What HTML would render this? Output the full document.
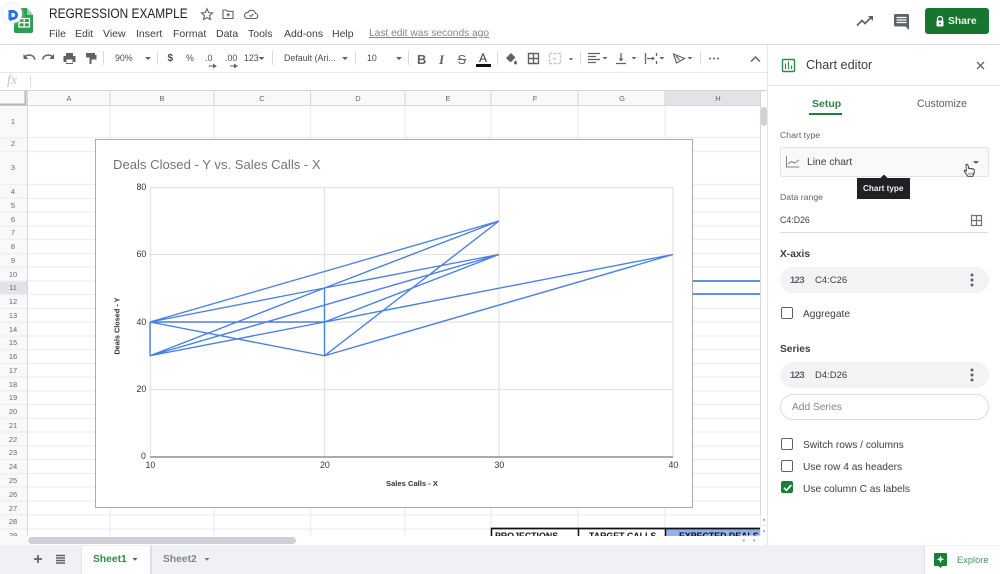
<!DOCTYPE html>
<html><head><meta charset="utf-8"><title>REGRESSION EXAMPLE</title>
<style>
html,body{margin:0;padding:0;width:1000px;height:574px;overflow:hidden;background:#fff}
body{position:relative;font-family:"Liberation Sans",sans-serif;color:#3c4043;filter:blur(.3px)}
.t{position:absolute;white-space:nowrap;line-height:1}
.b{position:absolute}
svg{position:absolute;overflow:visible}
.m{font-size:10.5px;top:28.500px;color:#3c4043}
.tb{font-size:8.8px;top:54px;color:#4a4d50}
.h{font-size:7.5px;color:#666;top:95px;width:30px;text-align:center}
.r{font-size:7.5px;color:#666;left:0;width:26px;text-align:center}
.l{font-size:8.7px;color:#5f6368;left:780px}
.p{font-size:10.2px;color:#3c4043}
.c{font-size:9.5px;color:#3c4043}
.ax{font-size:8.8px;color:#333}
.cb{position:absolute;left:781px;width:10px;height:10px;border:1.6px solid #5f6368;border-radius:2px}
</style></head><body>

<!-- header -->
<svg style="left:0;top:0" width="60" height="44" viewBox="0 0 60 44">
<path d="M14 10q0-2 2-2h11l6 7v16q0 2-2 2H16q-2 0-2-2z" fill="#2a9d4f"/>
<path d="M27 8l6 7h-6z" fill="#8ed1b1"/>
<path d="M19 18.500h10.500v8.500H19zM24.200 18.500v8.500M19 22.700h10.500" fill="none" stroke="#fff" stroke-width="1.300"/>
<circle cx="12.500" cy="13.500" r="9.500" fill="#fff" style="filter:drop-shadow(0 0 2px #ddd)"/>
<path d="M8.500 10h4.500a5 5 0 0 1 0 10h-1.500v-3H13a2 2 0 0 0 0-4h-1.500v8.500l-3-2z" fill="#2b6fe0"/>
</svg>
<div class="t" style="left:49px;top:6.500px;font-size:13.500px;color:#202124;transform:scaleX(.88);transform-origin:0 0">REGRESSION EXAMPLE</div>
<svg style="left:200px;top:7px" width="60" height="14" viewBox="0 0 60 14" fill="none" stroke="#5f6368" stroke-width="1.100">
<path d="M7 1.800l1.600 3.700 4 .4-3 2.700.9 3.900L7 10.500l-3.500 2 .9-3.900-3-2.700 4-.4z"/>
<path d="M23 3h3.500l1 1.300H33v7.200H23zM28.200 6v3.600M26.400 7.800H30"/>
<path d="M47 11.500h8a2.500 2.500 0 0 0 .5-5 4 4 0 0 0-7.500-1 3 3 0 0 0-1 6zM49.500 8.200l1.400 1.300 2.300-2.500"/>
</svg>
<span class="t m" style="left:49px">File</span><span class="t m" style="left:75px">Edit</span><span class="t m" style="left:103px">View</span><span class="t m" style="left:136px">Insert</span><span class="t m" style="left:173px">Format</span><span class="t m" style="left:216px">Data</span><span class="t m" style="left:248px">Tools</span><span class="t m" style="left:284px">Add-ons</span><span class="t m" style="left:332px">Help</span>
<span class="t m" style="left:369px;color:#80868b;text-decoration:underline;font-size:10.200px">Last edit was seconds ago</span>

<svg style="left:855px;top:13px" width="60" height="18" viewBox="0 0 60 18">
<path d="M2 12.500l5-5 3 3 6.500-6.500" fill="none" stroke="#5f6368" stroke-width="1.700"/><path d="M13 3h5v5z" fill="#5f6368"/>
<path d="M40.500 1h12q1.500 0 1.500 1.500V17l-3.500-3.500h-10q-1.500 0-1.500-1.500V2.500Q39 1 40.500 1z" fill="#5f6368"/>
<path d="M41.500 4.500h10M41.500 7h10M41.500 9.500h10" stroke="#fff" stroke-width="1.200"/>
</svg>
<div class="b" style="left:925px;top:8px;width:64px;height:26px;background:#18752f;border-radius:3px"></div>
<svg style="left:935px;top:16px" width="10" height="11" viewBox="0 0 10 11"><path d="M2.500 4.500V3a2.500 2.500 0 0 1 5 0v1.500" fill="none" stroke="#fff" stroke-width="1.200"/><rect x="1.500" y="4.500" width="7" height="6" rx="1" fill="#fff"/><circle cx="5" cy="7.500" r="1" fill="#18752f"/></svg>
<span class="t" style="left:948px;top:17px;font-size:10.300px;font-weight:bold;color:#e8f3ea">Share</span>

<div class="b" style="left:0;top:44px;width:1000px;height:1px;background:#dadce0"></div>

<!-- toolbar -->
<svg style="left:0;top:45px" width="768" height="27" viewBox="0 45 768 27">
<g fill="none" stroke="#5f6368" stroke-width="1.400">
<path d="M25 56.500q4-3 8.500 0l1.500 3M52.500 56.500q-4-3-8.500 0l-1.500 3"/>
</g>
<path d="M23.500 54v5h4.800zM54 54v5h-4.800z" fill="#5f6368"/>
<path d="M66 53h7v3h2.500v6H73v2h-7v-2h-2.500v-6H66z" fill="#5f6368"/><rect x="66.500" y="59.500" width="6" height="3.500" fill="#fff"/>
<path d="M86 53h9v4.500h-9zM95 55h1.500v4.500h-5V64h-2v-6.500h5V55z" fill="#5f6368"/>
<g fill="#5f6368">
<path d="M145 57h6l-3 3zM258.500 57h6l-3 3zM342 57h6l-3 3zM396 57h6l-3 3zM569 58h4l-2 2.500z"/>
<path d="M602.500 57h5l-2.500 2.500zM631.500 57h5l-2.500 2.500zM659.500 57h5l-2.500 2.500zM687.500 57h5l-2.500 2.500z"/>
<circle cx="710" cy="58.500" r="1"/><circle cx="714" cy="58.500" r="1"/><circle cx="718" cy="58.500" r="1"/>
</g>
<path d="M213.500 66h-5M216 66l-2.500-1.500v3zM230 66h5M237 66l-2.500-1.500v3z" stroke="#5f6368" stroke-width="1" fill="#5f6368"/>
<g stroke="#dadce0" stroke-width="1"><path d="M103.500 51v14M157.500 51v14M272.500 51v14M355.500 51v14M408.500 51v14M497.500 51v14M580.500 51v14M700.500 51v14"/></g>
<rect x="476" y="64" width="15" height="3" fill="#111"/>
<!-- fill -->
<path d="M506 58l5-5 4.500 4.500-4 4q-1 1-2 0zM515.500 60q1.500 2 1.500 3a1.200 1.200 0 0 1-3 0q0-1 1.500-3z" fill="#5f6368"/>
<!-- borders -->
<path d="M528.500 53.500h10v10h-10zM533.500 53.500v10M528.500 58.500h10" fill="none" stroke="#5f6368" stroke-width="1.400"/>
<path d="M549.500 53.500h11v10h-11zM553 58.500h4" fill="none" stroke="#c4c7c9" stroke-width="1.400" stroke-dasharray="3 1.200"/>
<!-- aligns -->
<path d="M588 53.500h12M588 56.500h8M588 59.500h12M588 62.500h8" stroke="#5f6368" stroke-width="1.200"/>
<path d="M616 63.500h10M621 53v7" stroke="#5f6368" stroke-width="1.300"/><path d="M618.500 58.500h5l-2.500 3z" fill="#5f6368"/>
<path d="M645.500 53v11M656.500 53v3M656.500 61v3M647 58.500h7" stroke="#5f6368" stroke-width="1.300"/><path d="M652 56.500l3 2-3 2z" fill="#5f6368"/>
<path d="M673.500 54l11 4.500-8 4.500zM676 56l3.500 4" fill="none" stroke="#5f6368" stroke-width="1.200"/>
<path d="M751 61.500l4.500-4.500 4.500 4.500" fill="none" stroke="#5f6368" stroke-width="1.500"/>
</svg>
<span class="t tb" style="left:115px">90%</span>
<span class="t tb" style="left:167.500px;font-weight:bold;font-size:10px;top:54px">$</span>
<span class="t tb" style="left:186px">%</span>
<span class="t tb" style="left:205px">.0</span>
<span class="t tb" style="left:225px">.00</span>
<span class="t tb" style="left:244px">123</span>
<span class="t tb" style="left:284px;font-size:8.900px">Default (Ari...</span>
<span class="t tb" style="left:367px">10</span>
<span class="t" style="left:417px;top:52.500px;font-size:13px;font-weight:bold;color:#5f6368">B</span>
<span class="t" style="left:439px;top:52.500px;font-size:13px;font-style:italic;font-family:'Liberation Serif',serif;font-weight:bold;color:#5f6368">I</span>
<span class="t" style="left:457.500px;top:52.500px;font-size:13px;color:#5f6368;text-decoration:line-through">S</span>
<span class="t" style="left:479px;top:52px;font-size:12px;color:#333">A</span>

<div class="b" style="left:0;top:72px;width:768px;height:1px;background:#e6e7e9"></div>
<!-- fx bar -->
<span class="t" style="left:7px;top:73px;font:italic 14px 'Liberation Serif',serif;color:#c0c3c6">fx</span>
<div class="b" style="left:30px;top:75px;width:1px;height:12px;background:#dadce0"></div>
<div class="b" style="left:0;top:90px;width:768px;height:1px;background:#cfd1d4"></div>

<!-- grid -->
<svg style="left:0;top:0" width="1000" height="574" viewBox="0 0 1000 574">
<rect x="0" y="91" width="760" height="15" fill="#f8f9fa"/>
<rect x="665" y="91" width="95" height="15" fill="#e1e3e7"/>
<rect x="0" y="106" width="27" height="430" fill="#f8f9fa"/>
<rect x="0" y="281" width="27" height="14" fill="#e1e3e7"/>
<g stroke="#eeeef0" stroke-width="1.300">
<path d="M0 137.500H760M0 151.500H760M0 184.500H760M0 198.500H760M0 212H760M0 226H760M0 239.500H760M0 253.500H760M0 267H760M0 281H760M0 294.500H760M0 308.500H760M0 322H760M0 336H760M0 349.500H760M0 363.500H760M0 377H760M0 391H760M0 404.500H760M0 418.500H760M0 432H760M0 446H760M0 459.500H760M0 473.500H760M0 487H760M0 501H760M0 515H760M0 529H760"/>
<path d="M110 91V536M214 91V536M310.500 91V536M405 91V536M491 91V536M578 91V536M665 91V536"/>
</g>
<g stroke="#d6d8db" stroke-width="1"><path d="M0 105.500H760M27.500 91V536M110 91V106M214 91V106M310.500 91V106M405 91V106M491 91V106M578 91V106M665 91V106M760.500 91V536"/></g>
<path d="M0 104.500H25.500V91" fill="none" stroke="#b4b6b9" stroke-width="2"/>
<!-- Projections -->
<rect x="666" y="529" width="94" height="8" fill="#8fb1f0"/>
<path d="M491 528.500H760" stroke="#111" stroke-width="1.800"/>
<path d="M491.500 528V537M578.500 528V537M665.500 528V537" stroke="#111" stroke-width="1.500"/>
<path d="M692 281H760M692 294H760" stroke="#4a80e6" stroke-width="1.800"/>
</svg>
<div class="b" style="left:491px;top:530px;width:269px;height:6px;overflow:hidden">
<span class="t" style="left:4px;top:2px;font-size:8.800px;font-weight:bold;color:#111">PROJECTIONS</span>
<span class="t" style="left:98px;top:2px;font-size:8.800px;font-weight:bold;color:#111">TARGET CALLS</span>
<span class="t" style="left:188px;top:2px;font-size:8.800px;font-weight:bold;color:#111">EXPECTED DEALS</span>
</div>
<span class="t h" style="left:54px">A</span><span class="t h" style="left:147px">B</span><span class="t h" style="left:247px">C</span><span class="t h" style="left:343px">D</span><span class="t h" style="left:433px">E</span><span class="t h" style="left:520px">F</span><span class="t h" style="left:607px">G</span><span class="t h" style="left:703px">H</span>
<span class="t r" style="top:118px">1</span><span class="t r" style="top:140px">2</span><span class="t r" style="top:164px">3</span><span class="t r" style="top:188px">4</span><span class="t r" style="top:202px">5</span><span class="t r" style="top:216px">6</span><span class="t r" style="top:229px">7</span><span class="t r" style="top:243px">8</span><span class="t r" style="top:257px">9</span><span class="t r" style="top:271px">10</span><span class="t r" style="top:284px">11</span><span class="t r" style="top:298px">12</span><span class="t r" style="top:312px">13</span><span class="t r" style="top:326px">14</span><span class="t r" style="top:339px">15</span><span class="t r" style="top:353px">16</span><span class="t r" style="top:367px">17</span><span class="t r" style="top:381px">18</span><span class="t r" style="top:394px">19</span><span class="t r" style="top:408px">20</span><span class="t r" style="top:422px">21</span><span class="t r" style="top:436px">22</span><span class="t r" style="top:449px">23</span><span class="t r" style="top:463px">24</span><span class="t r" style="top:477px">25</span><span class="t r" style="top:491px">26</span><span class="t r" style="top:505px">27</span><span class="t r" style="top:518px">28</span><span class="t r" style="top:532px">29</span>

<!-- chart -->
<div class="b" style="left:95px;top:139px;width:596px;height:367px;background:#fff;border:1px solid #ababab"></div>
<span class="t" style="left:113px;top:157.500px;font-size:13.100px;color:#757575">Deals Closed - Y vs. Sales Calls - X</span>
<svg style="left:0;top:0" width="1000" height="574" viewBox="0 0 1000 574">
<g stroke="#e3e3e3" stroke-width="1.200" fill="none">
<path d="M150 187.500H673M150 254.500H673M150 322H673M150 389.500H673M150.500 187V457M324.500 187V457M499 187V457M673 187V457"/>
</g>
<path d="M150 457H673" stroke="#777" stroke-width="1.200"/>
<g fill="none" stroke="#4a80e6" stroke-width="1.400">
<path d="M150 322L499 221M150 322L324.500 288L499 254.500M150 355.750L324.500 288L499 221M150 355.750L499 254.500M150 355.750L324.500 322L499 254.500M150 322H324.500L673 254.500M150 322L324.500 355.750L499 221M324.500 355.750L673 254.500M150 322V355.750M324.500 288V355.750"/>
</g>
</svg>
<span class="t ax" style="left:136.500px;top:183px">80</span><span class="t ax" style="left:136.500px;top:250px">60</span><span class="t ax" style="left:136.500px;top:318px">40</span><span class="t ax" style="left:136.500px;top:385px">20</span><span class="t ax" style="left:141px;top:452px">0</span>
<span class="t ax" style="left:145.500px;top:461px">10</span><span class="t ax" style="left:320px;top:461px">20</span><span class="t ax" style="left:494.500px;top:461px">30</span><span class="t ax" style="left:668.500px;top:461px">40</span>
<span class="t" style="left:386px;top:480px;font-size:7.600px;font-weight:bold;color:#333">Sales Calls - X</span>
<span class="t" style="left:117px;top:326px;font-size:7.300px;font-weight:bold;color:#333;transform:translate(-50%,-50%) rotate(-90deg)">Deals Closed - Y</span>

<!-- scrollbars -->
<div class="b" style="left:761px;top:91px;width:7px;height:454px;background:#fff"></div>
<div class="b" style="left:761px;top:107px;width:6px;height:19px;border-radius:3px;background:#ced1d5"></div>
<div class="b" style="left:0;top:536px;width:768px;height:9px;background:#fff"></div>
<div class="b" style="left:0;top:536px;width:27px;height:9px;background:#f8f9fa"></div>
<div class="b" style="left:28px;top:537px;width:268px;height:7px;border-radius:4px;background:#ced1d5"></div>
<svg style="left:740px;top:514px" width="28" height="31" viewBox="0 0 28 31"><path d="M22.500 6.500h3l-1.500-2zM22.500 16.500h3l-1.500 2zM4.500 25l-2 1.500 2 1.500zM13.500 25l2 1.500-2 1.500z" fill="#8a8d90"/><path d="M20.500 0V22H0M20.500 11.500H28" stroke="#eceded" fill="none"/></svg>

<!-- bottom bar -->
<div class="b" style="left:0;top:545px;width:1000px;height:29px;background:#f0f1f4"></div>
<div class="b" style="left:82px;top:546px;width:68px;height:28px;background:#fff;box-shadow:1px 0 0 #dcdde0,-1px 0 0 #e4e5e8"></div>
<div class="b" style="left:151px;top:546px;width:1px;height:28px;background:#dcdde0"></div>
<div class="b" style="left:925px;top:546px;width:75px;height:28px;background:#fff;box-shadow:-1px 0 0 #dcdde0"></div>
<svg style="left:0;top:545px" width="1000" height="29" viewBox="0 545 1000 29">
<path d="M34 559h8M38 555v8" stroke="#5f6368" stroke-width="1.700"/>
<path d="M56 555.500h9M56 558h9M56 560.500h9M56 563h9" stroke="#5f6368" stroke-width="1.500"/>
<path d="M132.500 558h5l-2.500 2.700z" fill="#188038"/>
<path d="M204.500 558h5l-2.500 2.700z" fill="#777"/>
<path d="M935 553h11q1 0 1 1v11q0 1-1 1h-3.500l-2 2-2-2H935q-1 0-1-1v-11q0-1 1-1z" fill="#188038"/>
<path d="M940.500 555.500l1 2.800 2.800 1-2.800 1-1 2.800-1-2.800-2.800-1 2.800-1z" fill="#fff"/>
</svg>
<span class="t" style="left:93px;top:555px;font-size:10.300px;font-weight:bold;color:#2f8a4b">Sheet1</span>
<span class="t" style="left:163px;top:555px;font-size:10.300px;font-weight:bold;color:#80868b">Sheet2</span>
<span class="t" style="left:957px;top:555.500px;font-size:9.300px;color:#3f9a5e">Explore</span>

<!-- side panel -->
<div class="b" style="left:768px;top:45px;width:232px;height:500px;background:#fff"></div>
<div class="b" style="left:767px;top:45px;width:1px;height:500px;background:#e6e7e9"></div>
<div class="b" style="left:768px;top:85px;width:232px;height:1px;background:#e3e4e6"></div>
<svg style="left:0;top:0" width="1000" height="574" viewBox="0 0 1000 574">
<rect x="782.500" y="59.500" width="12" height="12" rx="1" fill="none" stroke="#2a8a4a" stroke-width="1.400"/>
<path d="M785.500 63.500v5.500M788.500 61.500v7.500M791.500 65.500v3.500" stroke="#2a8a4a" stroke-width="1.200"/>
<path d="M977 62l7 7M984 62l-7 7" stroke="#5f6368" stroke-width="1.300"/>
<rect x="809" y="113" width="33" height="2" fill="#188038"/>
<rect x="780.500" y="147.500" width="208" height="29" rx="2" fill="#f8f9fa" stroke="#e2e3e5"/>
<path d="M786.500 156v11h13" fill="none" stroke="#808387" stroke-width="1"/>
<path d="M788 164l3.500-2.500 3 1.500 4.500-3" fill="none" stroke="#808387" stroke-width="1"/>
<path d="M973 161h6l-3 3z" fill="#5f6368"/>
<rect x="857" y="178" width="53" height="21" fill="#202124"/><path d="M880 178.500l4-4 4 4z" fill="#202124"/>
<path d="M780 232.500H988" stroke="#dadce0"/>
<path d="M971.500 215.500h10v10h-10zM976.500 215.500v10M971.500 220.500h10" fill="none" stroke="#70757a" stroke-width="1.200"/>
<rect x="780" y="267" width="209" height="26" rx="13" fill="#f1f3f4"/>
<rect x="780" y="362" width="209" height="26" rx="13" fill="#f1f3f4"/>
<rect x="780.500" y="394.500" width="208" height="25" rx="12.500" fill="#fff" stroke="#dadce0"/>
<g fill="#5f6368"><circle cx="972" cy="275" r="1.500"/><circle cx="972" cy="280" r="1.500"/><circle cx="972" cy="285" r="1.500"/><circle cx="972" cy="370" r="1.500"/><circle cx="972" cy="375" r="1.500"/><circle cx="972" cy="380" r="1.500"/></g>
<!-- hand cursor -->
<path d="M966 164.500q1.500-.8 2 .8l.8 3.200 1-.3 .3.500 1.500-.2 .4.500 1.500 0 .8 .8-.2 3.500-1.300 3h-5l-3.500-5 .3-1 1.800.8z" fill="#fff" stroke="#333" stroke-width=".9"/>
<path d="M969 172.500v2.500M971 172.500v2.500M973 172.500v2.500" stroke="#333" stroke-width=".6"/>
</svg>
<span class="t" style="left:806px;top:58.500px;font-size:12.700px;color:#3c4043">Chart editor</span>
<span class="t" style="left:812px;top:99px;font-size:10.500px;font-weight:bold;color:#268745">Setup</span>
<span class="t" style="left:917px;top:99px;font-size:10.600px;color:#5f6368">Customize</span>
<span class="t l" style="top:131px">Chart type</span>
<span class="t p" style="left:807px;top:158px;font-size:10.300px">Line chart</span>
<span class="t" style="left:863px;top:184.500px;font-size:8.200px;font-weight:bold;color:#eee">Chart type</span>
<span class="t l" style="top:193px">Data range</span>
<span class="t c" style="left:780px;top:215.500px;font-size:8.800px">C4:D26</span>
<span class="t" style="left:780px;top:250px;font-size:10.200px;font-weight:bold;color:#3c4043">X-axis</span>
<span class="t" style="left:790px;top:276px;font-size:9.500px;font-weight:bold;color:#5f6368;letter-spacing:-.6px">123</span>
<span class="t c" style="left:815px;top:275.500px">C4:C26</span>
<div class="cb" style="top:307px"></div>
<span class="t p" style="left:803px;top:310px">Aggregate</span>
<span class="t" style="left:780px;top:345px;font-size:10.200px;font-weight:bold;color:#3c4043">Series</span>
<span class="t" style="left:790px;top:371px;font-size:9.500px;font-weight:bold;color:#5f6368;letter-spacing:-.6px">123</span>
<span class="t c" style="left:815px;top:370.500px">D4:D26</span>
<span class="t p" style="left:792px;top:403px;color:#80868b">Add Series</span>
<div class="cb" style="top:438px"></div>
<span class="t p" style="left:803px;top:441px">Switch rows / columns</span>
<div class="cb" style="top:460px"></div>
<span class="t p" style="left:803px;top:462.500px">Use row 4 as headers</span>
<div class="cb" style="top:481px;background:#188038;border-color:#188038"></div>
<svg style="left:781px;top:481px" width="13" height="13" viewBox="0 0 13 13"><path d="M3 6.800l2.500 2.500 4.800-5.300" fill="none" stroke="#fff" stroke-width="1.700"/></svg>
<span class="t p" style="left:803px;top:484.500px">Use column C as labels</span>
</body></html>
